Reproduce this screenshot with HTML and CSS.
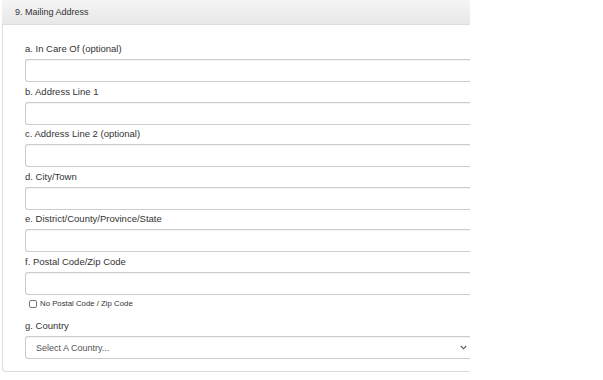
FILE: index.html
```html
<!DOCTYPE html>
<html lang="en">
<head>
    <meta charset="UTF-8">
    <title>Mailing Address</title>
    <link rel="stylesheet" href="styles.css">
</head>
<body>
    <div class="panel">
        <div class="panel-heading">9. Mailing Address</div>
        <div class="panel-body">
            <div class="form-group first">
                <label for="careof">a. In Care Of (optional)</label>
                <input type="text" id="careof" class="form-control">
            </div>
            <div class="form-group">
                <label for="line1">b. Address Line 1</label>
                <input type="text" id="line1" class="form-control">
            </div>
            <div class="form-group">
                <label for="line2">c. Address Line 2 (optional)</label>
                <input type="text" id="line2" class="form-control">
            </div>
            <div class="form-group">
                <label for="city">d. City/Town</label>
                <input type="text" id="city" class="form-control">
            </div>
            <div class="form-group">
                <label for="state">e. District/County/Province/State</label>
                <input type="text" id="state" class="form-control">
            </div>
            <div class="form-group">
                <label for="postal">f. Postal Code/Zip Code</label>
                <input type="text" id="postal" class="form-control">
            </div>
            <div class="checkbox">
                <input type="checkbox" id="nopostal">
                <label for="nopostal">No Postal Code / Zip Code</label>
            </div>
            <div class="form-group">
                <label for="country">g. Country</label>
                <div class="select-wrap">
                    <select id="country" class="form-control">
                        <option>Select A Country...</option>
                    </select>
                    <svg class="chevron" width="7" height="5" viewBox="0 0 7 5"><path d="M0.8 1 L3.5 3.8 L6.2 1" fill="none" stroke="#555" stroke-width="1.1"/></svg>
                </div>
            </div>
        </div>
    </div>
</body>
</html>
```

FILE: styles.css
```css
body {
    margin: 0;
    font-family: "Liberation Sans", Arial, sans-serif;
    color: #333;
    background: #fff;
}
.panel {
    width: 468px;
    margin-left: 2px;
    height: 372px;
    box-sizing: border-box;
    border: 1px solid #ddd;
    border-top: none;
    border-right: none;
    border-radius: 0 0 0 3px;
}
.panel-heading {
    height: 25px;
    box-sizing: border-box;
    padding: 6px 0 0 13px;
    font-size: 9px;
    line-height: 12px;
    background: linear-gradient(#f5f5f5, #e8e8e8);
    border-bottom: 1px solid #ddd;
    margin-left: -1px;
}
.panel-body {
    padding: 18px 0 0 22px;
}
.form-group {
    margin-bottom: 3.5px;
}
.form-group label {
    display: block;
    font-size: 9.5px;
    line-height: 12px;
    margin-bottom: 4px;
}
.form-group.first label {
    margin-bottom: 4px;
}
.form-control {
    display: block;
    width: 100%;
    height: 23px;
    box-sizing: border-box;
    border: 1px solid #ccc;
    border-right: none;
    border-radius: 3px 0 0 3px;
    background: #fff;
    font-family: inherit;
    font-size: 9px;
    color: #555;
    padding: 0 10px;
    margin: 0;
    box-shadow: inset 0 1px 1px rgba(0,0,0,0.05);
}
.checkbox {
    display: flex;
    align-items: center;
    margin: 3px 0 10px 4px;
    height: 12px;
}
.checkbox input {
    width: 8px;
    height: 8px;
    margin: 0 3px 0 0;
    appearance: none;
    border: 1px solid #777;
    border-radius: 2px;
    background: #fff;
}
.checkbox label {
    font-size: 7.8px;
    line-height: 12px;
}
.select-wrap {
    position: relative;
}
select.form-control {
    appearance: none;
    padding-left: 10px;
    font-size: 9px;
}
.chevron {
    position: absolute;
    right: 3px;
    top: 9px;
}
```
